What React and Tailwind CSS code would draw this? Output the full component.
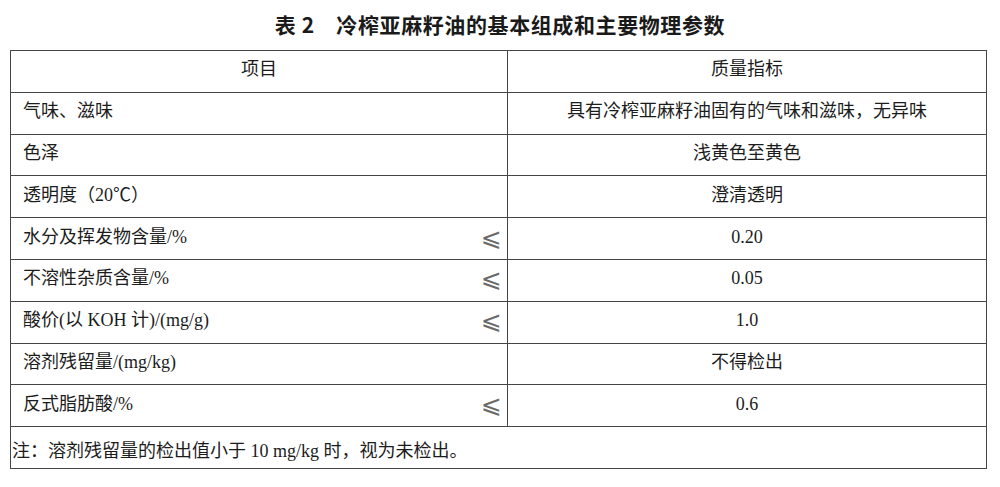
const rows = [
  { item: "气味、滋味", value: "具有冷榨亚麻籽油固有的气味和滋味，无异味" },
  { item: "色泽", value: "浅黄色至黄色" },
  { item: "透明度（20℃）", value: "澄清透明" },
  { item: "水分及挥发物含量/%", value: "0.20", le: true },
  { item: "不溶性杂质含量/%", value: "0.05", le: true },
  { item: "酸价(以 KOH 计)/(mg/g)", value: "1.0", le: true },
  { item: "溶剂残留量/(mg/kg)", value: "不得检出" },
  { item: "反式脂肪酸/%", value: "0.6", le: true },
];

export default function App() {
  return (
    <div className="w-[1000px] h-[487px] bg-white text-[#1c1c1c] font-['Liberation_Serif','Noto_Sans_CJK_SC',serif]">
      <div className="h-[50px] flex items-center justify-center pb-[1px]">
        <h1 className="text-[21px] font-bold tracking-[0.6px] text-[#1a1a1a] font-['Noto_Sans_CJK_SC',sans-serif]">
          表 2　冷榨亚麻籽油的基本组成和主要物理参数
        </h1>
      </div>

      <div className="ml-[10px] w-[977px] border-[1.5px] border-[#454545] text-[18px]">
        <div className="grid grid-cols-[497px_1fr] h-[41.8px] border-b-[1.5px] border-[#454545]">
          <div className="flex items-center justify-center border-r-[1.5px] border-[#454545] pb-[3px]">
            项目
          </div>
          <div className="flex items-center justify-center pb-[3px]">质量指标</div>
        </div>

        {rows.map((r) => (
          <div
            key={r.item}
            className="grid grid-cols-[497px_1fr] h-[41.8px] border-b-[1.5px] border-[#454545]"
          >
            <div className="flex items-center justify-between pl-[12px] pr-[5px] border-r-[1.5px] border-[#454545] pb-[3px]">
              <span>{r.item}</span>
              {r.le && (
                <span className="text-[25px] leading-none text-[#6a6a6a] font-['DejaVu_Serif','DejaVu_Sans',serif]">
                  ⩽
                </span>
              )}
            </div>
            <div className="flex items-center justify-center pb-[3px]">{r.value}</div>
          </div>
        ))}

        <div className="h-[41px] flex items-center pl-[1px] pt-[7px]">
          注：溶剂残留量的检出值小于 10 mg/kg 时，视为未检出。
        </div>
      </div>
    </div>
  );
}
